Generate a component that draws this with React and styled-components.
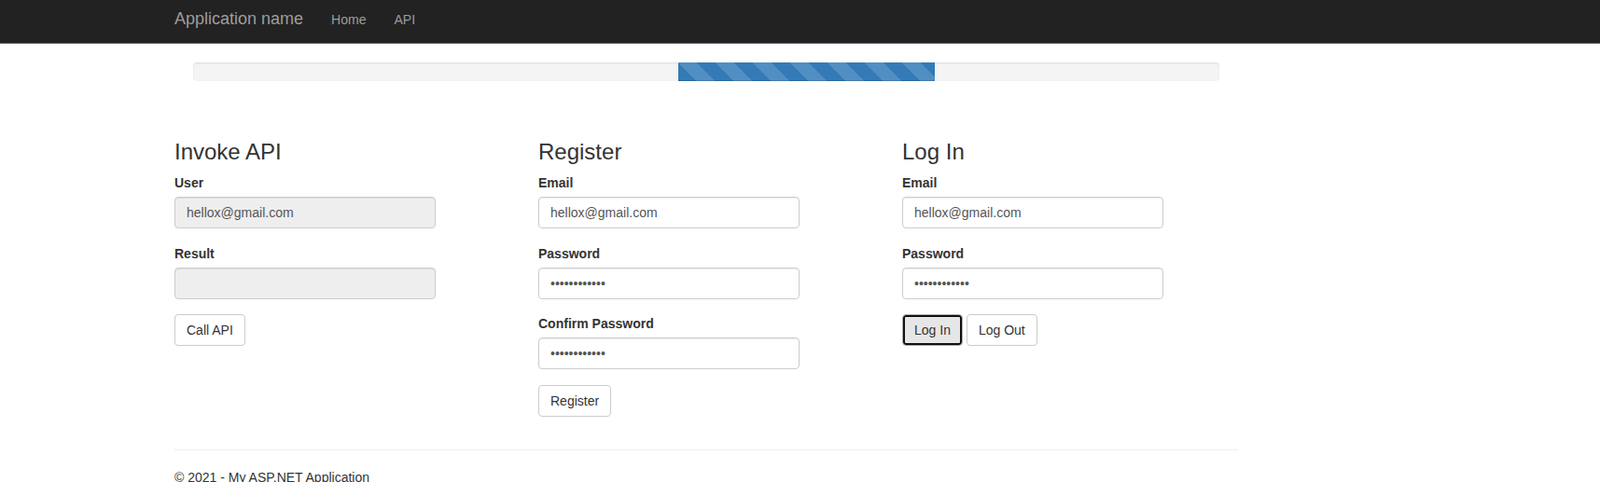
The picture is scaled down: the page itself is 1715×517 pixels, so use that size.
import React from "react";
import styled, { createGlobalStyle } from "styled-components";

const GlobalStyle = createGlobalStyle`
  *, *::before, *::after {
    box-sizing: border-box;
  }

  html, body {
    margin: 0;
    overflow: hidden;
    background: #fff;
  }

  body {
    font-family: "Liberation Sans", Arial, Helvetica, sans-serif;
    font-size: 14px;
    line-height: 1.42857;
    color: #333;
  }
`;

const NavbarWrapper = styled.nav`
  background-color: #222;
  border-bottom: 1px solid #6a6a6a;
  height: 47px;
`;

const NavbarContainer = styled.div`
  width: 1170px;
  margin-left: 172px;
  padding: 0 15px;
  display: flex;
  align-items: flex-start;
  height: 100%;
`;

const Brand = styled.a`
  font-size: 18px;
  line-height: 20px;
  color: #9d9d9d;
  text-decoration: none;
  padding: 10px 15px 0 0;
  cursor: pointer;
`;

const NavLink = styled.a`
  font-size: 14px;
  line-height: 20px;
  color: #9d9d9d;
  text-decoration: none;
  padding: 11px 15px 0;
  cursor: pointer;
`;

const Container = styled.div`
  width: 1170px;
  margin-left: 172px;
  padding: 0 15px;
`;

const Progress = styled.div`
  height: 20px;
  margin: 20px 20px 0;
  background-color: #f4f4f4;
  border-radius: 4px;
  box-shadow: inset 0 1px 2px rgba(0, 0, 0, 0.1);
  overflow: hidden;
`;

const ProgressBar = styled.div`
  height: 100%;
  margin-left: ${(props) => props.$offset}px;
  width: ${(props) => props.$width}px;
  background-color: #337ab7;
  background-image: linear-gradient(
    45deg,
    rgba(255, 255, 255, 0.15) 25%,
    transparent 25%,
    transparent 50%,
    rgba(255, 255, 255, 0.15) 50%,
    rgba(255, 255, 255, 0.15) 75%,
    transparent 75%,
    transparent
  );
  background-size: 40px 40px;
  box-shadow: inset 0 -1px 0 rgba(0, 0, 0, 0.12);
`;

const Columns = styled.div`
  display: grid;
  grid-template-columns: repeat(3, 360px);
  column-gap: 30px;
  margin-top: 43px;
`;

const Column = styled.section`
  display: flex;
  flex-direction: column;
`;

const Heading = styled.h3`
  font-size: 24px;
  font-weight: 500;
  line-height: 1.1;
  margin: 20px 0 10px;
  color: #333;
`;

const FormGroup = styled.div`
  margin-bottom: 16.5px;
`;

const Label = styled.label`
  display: block;
  font-weight: 700;
  line-height: 20px;
  margin-bottom: 5px;
`;

const TextInput = styled.input`
  display: block;
  width: 100%;
  max-width: 280px;
  height: 34px;
  padding: 6px 12px;
  font-family: inherit;
  font-size: 14px;
  line-height: 1.42857;
  color: #555;
  background-color: ${(props) => (props.$locked ? "#eee" : "#fff")};
  border: 1px solid #ccc;
  border-radius: 4px;
  box-shadow: inset 0 1px 1px rgba(0, 0, 0, 0.075);
  outline: none;
`;

const ButtonRow = styled.div`
  display: flex;
  gap: 4px;
  margin-bottom: 15.5px;
`;

const Button = styled.button`
  height: 34px;
  padding: 6px 12px;
  font-family: inherit;
  font-size: 14px;
  line-height: 20px;
  color: #333;
  background-color: ${(props) => (props.$focused ? "#e6e6e6" : "#fff")};
  border: 1px solid ${(props) => (props.$focused ? "#adadad" : "#ccc")};
  border-radius: 4px;
  box-shadow: ${(props) => (props.$focused ? "inset 0 0 0 2px #111" : "none")};
  cursor: pointer;
`;

const Divider = styled.hr`
  margin: 20px 0;
  border: 0;
  border-top: 1px solid #eee;
`;

const Footer = styled.footer`
  p {
    margin: 0 0 10px;
  }
`;

const Field = ({ label, value, type = "text", locked }) => (
  <FormGroup>
    <Label>{label}</Label>
    <TextInput type={type} value={value} readOnly $locked={locked} />
  </FormGroup>
);

const App = () => {
  const email = "hellox@gmail.com";
  const secret = "123456789012";

  return (
    <>
      <GlobalStyle />
      <NavbarWrapper>
        <NavbarContainer>
          <Brand>Application name</Brand>
          <NavLink>Home</NavLink>
          <NavLink>API</NavLink>
        </NavbarContainer>
      </NavbarWrapper>
      <Container>
        <Progress>
          <ProgressBar $offset={520} $width={275} />
        </Progress>
        <Columns>
          <Column>
            <Heading>Invoke API</Heading>
            <Field label="User" value={email} locked />
            <Field label="Result" value="" locked />
            <ButtonRow>
              <Button>Call API</Button>
            </ButtonRow>
          </Column>
          <Column>
            <Heading>Register</Heading>
            <Field label="Email" value={email} />
            <Field label="Password" value={secret} type="password" />
            <Field label="Confirm Password" value={secret} type="password" />
            <ButtonRow>
              <Button>Register</Button>
            </ButtonRow>
          </Column>
          <Column>
            <Heading>Log In</Heading>
            <Field label="Email" value={email} />
            <Field label="Password" value={secret} type="password" />
            <ButtonRow>
              <Button $focused>Log In</Button>
              <Button>Log Out</Button>
            </ButtonRow>
          </Column>
        </Columns>
        <Divider />
        <Footer>
          <p>&copy; 2021 - My ASP.NET Application</p>
        </Footer>
      </Container>
    </>
  );
};

export default App;
